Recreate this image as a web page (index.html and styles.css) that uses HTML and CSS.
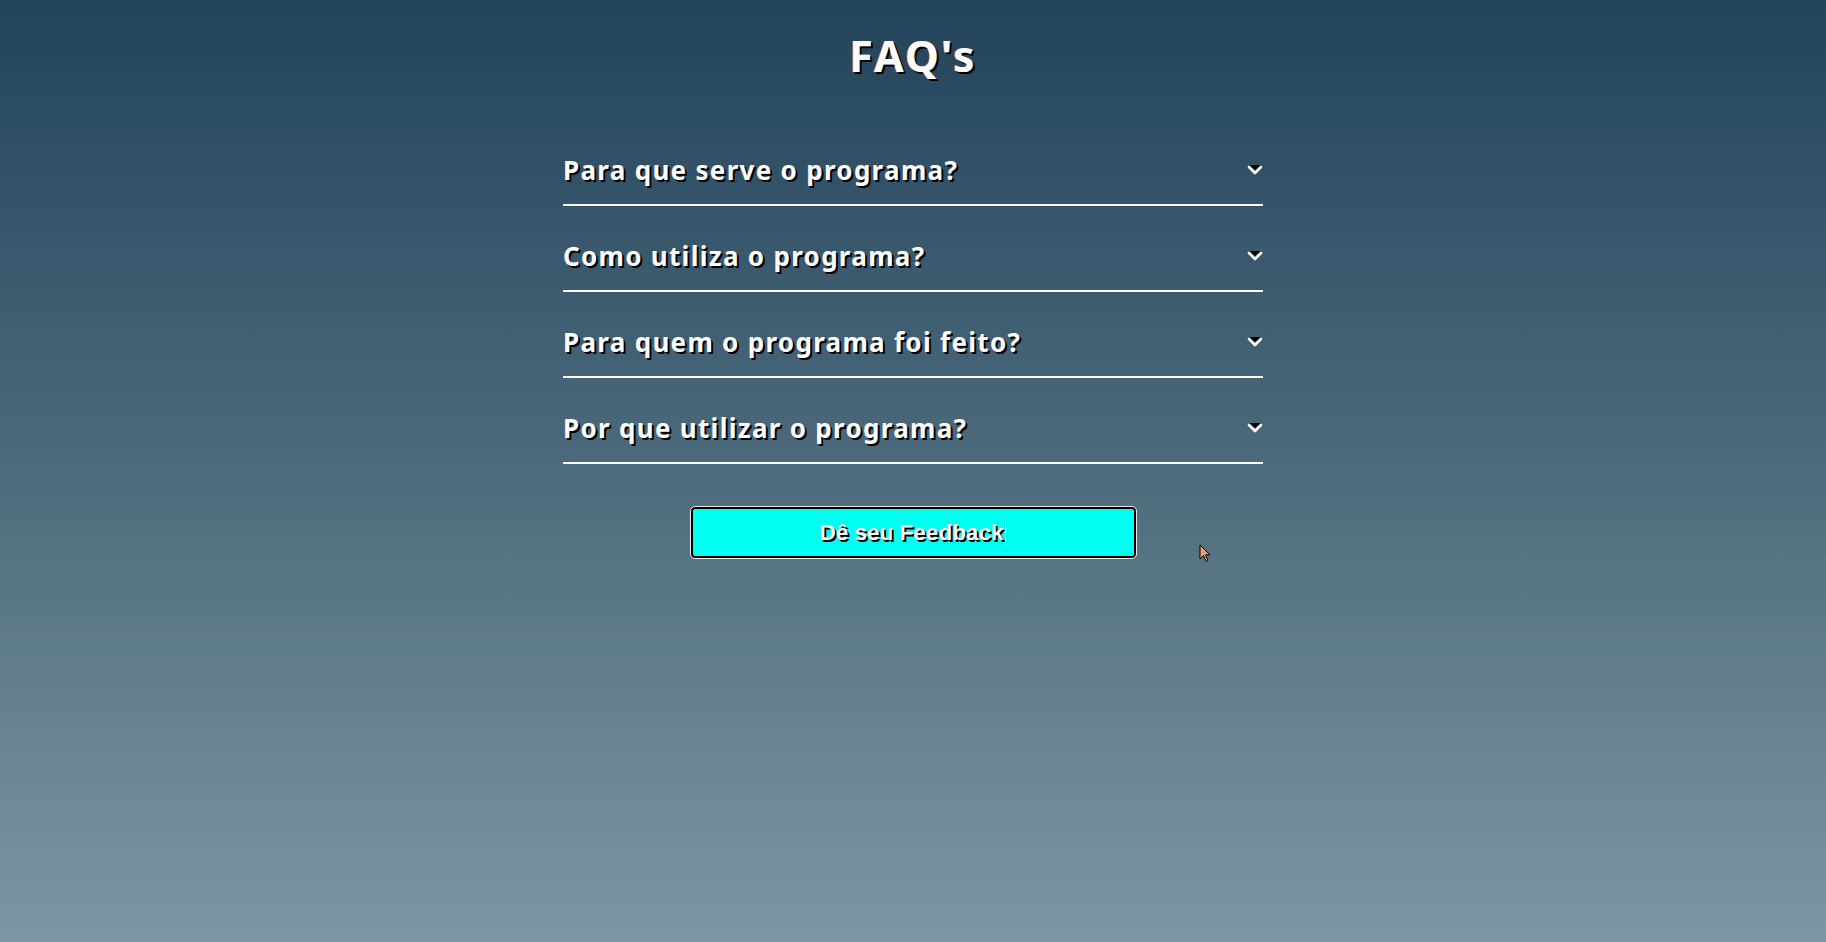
FILE: index.html
```html
<!DOCTYPE html>
<html lang="pt-BR">
<head>
<meta charset="utf-8">
<title>FAQ's</title>
<link rel="stylesheet" href="styles.css">
</head>
<body>
<main class="page">
  <h1 class="title">FAQ's</h1>
  <section class="faq">
    <div class="faq-item"><span class="faq-q">Para que serve o programa?</span><svg class="chev" width="18" height="12" viewBox="0 0 18 12"><polygon points="3,1 15,1 9,6" fill="#000"/><polyline points="3,3 9,9 15,3" fill="none" stroke="#fff" stroke-width="2.6" stroke-linecap="round" stroke-linejoin="round"/></svg></div>
    <div class="faq-item"><span class="faq-q">Como utiliza o programa?</span><svg class="chev" width="18" height="12" viewBox="0 0 18 12"><polygon points="3,1 15,1 9,6" fill="#000"/><polyline points="3,3 9,9 15,3" fill="none" stroke="#fff" stroke-width="2.6" stroke-linecap="round" stroke-linejoin="round"/></svg></div>
    <div class="faq-item"><span class="faq-q">Para quem o programa foi feito?</span><svg class="chev" width="18" height="12" viewBox="0 0 18 12"><polygon points="3,1 15,1 9,6" fill="#000"/><polyline points="3,3 9,9 15,3" fill="none" stroke="#fff" stroke-width="2.6" stroke-linecap="round" stroke-linejoin="round"/></svg></div>
    <div class="faq-item"><span class="faq-q">Por que utilizar o programa?</span><svg class="chev" width="18" height="12" viewBox="0 0 18 12"><polygon points="3,1 15,1 9,6" fill="#000"/><polyline points="3,3 9,9 15,3" fill="none" stroke="#fff" stroke-width="2.6" stroke-linecap="round" stroke-linejoin="round"/></svg></div>
  </section>
  <button class="feedback" type="button">Dê seu Feedback<span class="caret"></span></button>
</main>
<svg class="mouse" width="12" height="19" viewBox="0 0 12 19"><path d="M1 1 L1 15 L4.5 11.5 L7 17.5 L9 16.6 L6.6 10.8 L11 10.8 Z" fill="#e8a07c" stroke="#000" stroke-width="1" stroke-linejoin="round"/></svg>
</body>
</html>
```
FILE: styles.css
```css
html, body {
  margin: 0;
  padding: 0;
}
body {
  min-height: 100vh;
  background: linear-gradient(180deg, #22435a 0%, #4e6b7d 50%, #7c97a2 100%);
  font-family: "Noto Sans", "DejaVu Sans", sans-serif;
  color: #fff;
  position: relative;
}
.page {
  display: flex;
  flex-direction: column;
  align-items: center;
}
.title {
  margin: 0;
  padding-top: 28px;
  height: 92px;
  box-sizing: border-box;
  font-size: 43px;
  line-height: 56px;
  font-weight: 700;
  letter-spacing: 2px;
  text-shadow: 2px 2px 0 #000, -1px 0 0 #c0603a;
}
.faq {
  width: 700px;
  display: flex;
  flex-direction: column;
  margin-top: 28px;
}
.faq-item {
  display: flex;
  align-items: center;
  justify-content: space-between;
  padding: 30px 0 14px;
  height: 40px;
  border-bottom: 2px solid #fff;
}
.faq-q {
  font-size: 26px;
  line-height: 40px;
  font-weight: 700;
  letter-spacing: 1.3px;
  text-shadow: 2px 2px 0 #000;
}
.chev {
  display: block;
  margin-right: -1px;
}
.feedback {
  margin-top: 43px;
  width: 445px;
  height: 51px;
  background: #00fff0;
  border: 2px solid #000;
  outline: 1px solid #e8e8e8;
  border-radius: 4px;
  font-family: "Liberation Sans", Arial, sans-serif;
  font-size: 22.5px;
  font-weight: 700;
  color: #fff;
  text-shadow: 2px 2px 0 #000;
  display: flex;
  align-items: center;
  justify-content: center;
  padding: 0;
}
.caret {
  display: inline-block;
  width: 1px;
  height: 26px;
  background: #fff;
  margin-left: 2px;
  flex: none;
}
.mouse {
  position: absolute;
  left: 1199px;
  top: 544px;
}
```
